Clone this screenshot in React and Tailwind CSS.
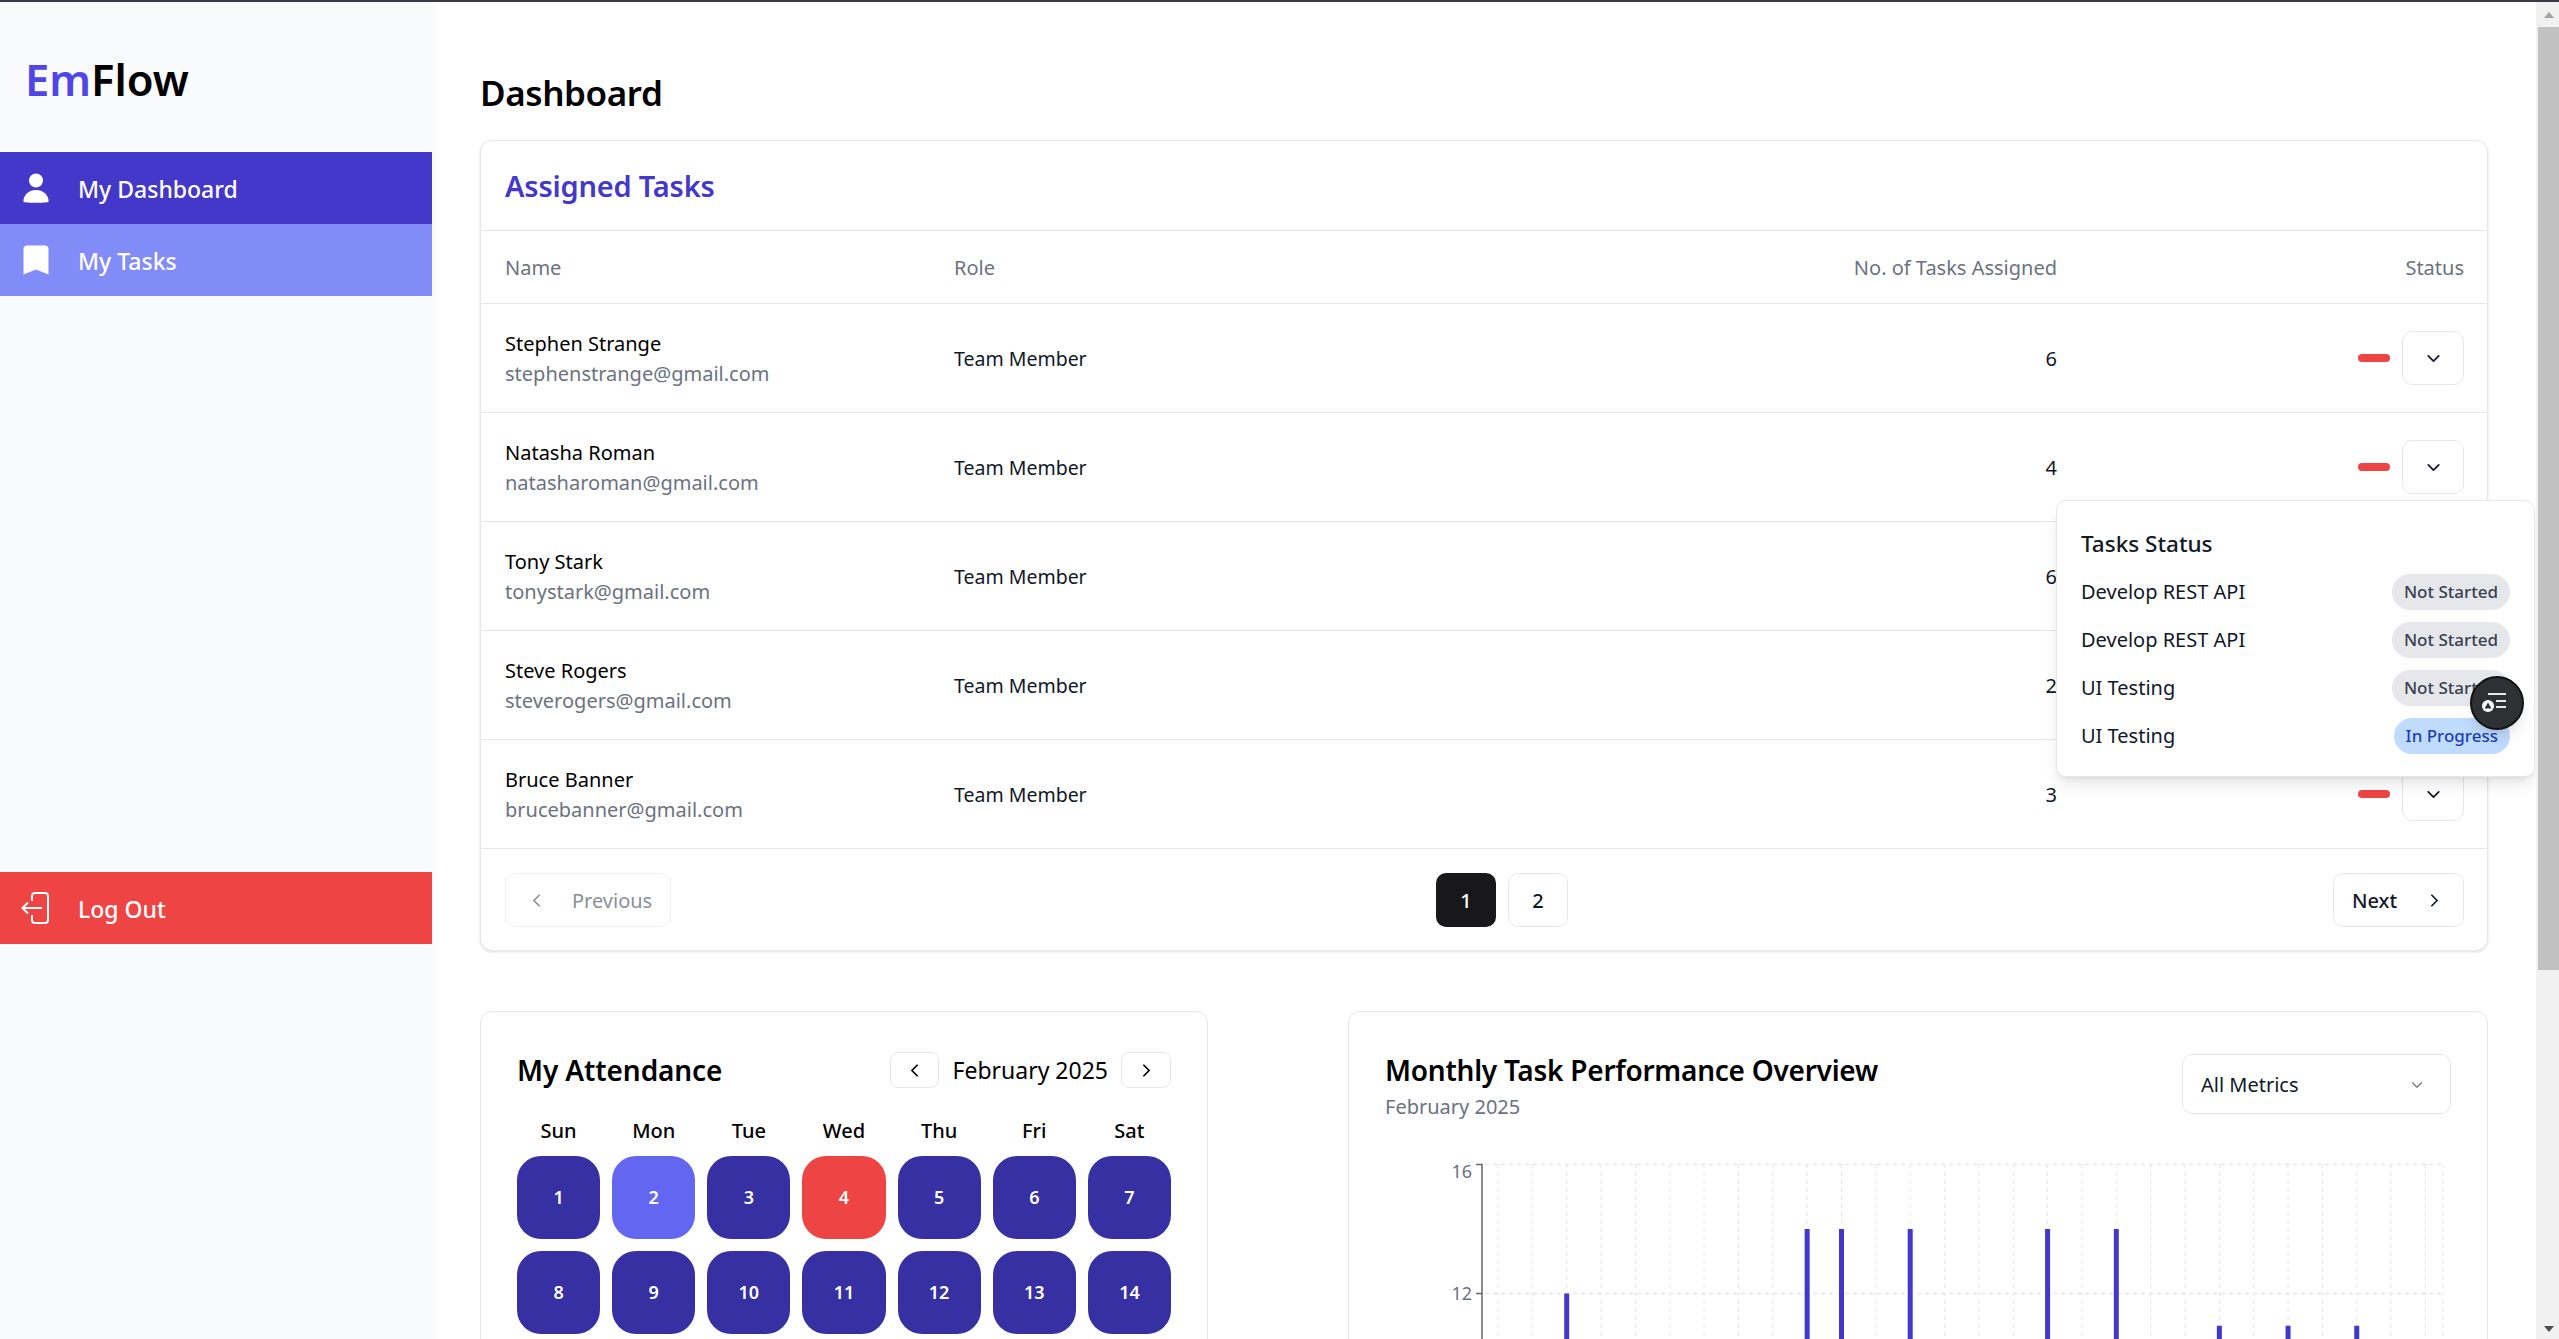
import { ChevronDown, ChevronLeft, ChevronRight } from "lucide-react";

const members = [
  { name: "Stephen Strange", email: "stephenstrange@gmail.com", count: 6 },
  { name: "Natasha Roman", email: "natasharoman@gmail.com", count: 4 },
  { name: "Tony Stark", email: "tonystark@gmail.com", count: 6 },
  { name: "Steve Rogers", email: "steverogers@gmail.com", count: 2 },
  { name: "Bruce Banner", email: "brucebanner@gmail.com", count: 3 }
];

const tasks = [
  { title: "Develop REST API", status: "Not Started" },
  { title: "Develop REST API", status: "Not Started" },
  { title: "UI Testing", status: "Not Started" },
  { title: "UI Testing", status: "In Progress" }
];

const weekDays = ["Sun", "Mon", "Tue", "Wed", "Thu", "Fri", "Sat"];
const days = [1, 2, 3, 4, 5, 6, 7, 8, 9, 10, 11, 12, 13, 14];

// day index -> value for the performance chart
const bars = [
  { index: 2, value: 12 },
  { index: 9, value: 14 },
  { index: 10, value: 14 },
  { index: 12, value: 14 },
  { index: 16, value: 14 },
  { index: 18, value: 14 },
  { index: 21, value: 11 },
  { index: 23, value: 11 },
  { index: 25, value: 11 }
];

const rowGrid = "grid grid-cols-[449px_400px_751px_406px] items-center";

function PersonIcon() {
  return (
    <svg width="26" height="30" viewBox="0 0 26 30" fill="white">
      <circle cx="13" cy="7.5" r="7" />
      <path d="M0.5 29c-0.6-6.500 5-12 12.500-12s13.100 5.500 12.500 12c-4 1-21 1-25 0z" />
    </svg>
  );
}

function BookmarkIcon() {
  return (
    <svg width="26" height="30" viewBox="0 0 26 30" fill="white">
      <path d="M0.500 4c0-2.200 1.300-3.500 3.500-3.500h18c2.200 0 3.500 1.300 3.500 3.500v25.500L13 24.500 0.500 29.500z" />
    </svg>
  );
}

function LogoutIcon() {
  return (
    <svg width="28" height="32" viewBox="0 0 28 32" fill="none" stroke="white" strokeWidth="2">
      <path d="M11 9V4c0-1.700 1.300-3 3-3h10c1.700 0 3 1.300 3 3v24c0 1.700-1.300 3-3 3H14c-1.700 0-3-1.300-3-3v-5" />
      <path d="M21 16H2M7 10.500L1.500 16 7 21.500" />
    </svg>
  );
}

function TaskListIcon() {
  return (
    <svg width="24" height="20" viewBox="0 0 24 20" fill="none">
      <path d="M6 1h18M14 8h10M14 14h10" stroke="#e5e7eb" strokeWidth="2" />
      <circle cx="6" cy="13" r="6" fill="white" />
      <path d="M6 9.500l3.500 6h-7z" fill="#2f3032" />
    </svg>
  );
}

function Sidebar() {
  return (
    <aside className="w-[432px] shrink-0 bg-[#f9fafb] shadow-[2px_0_10px_rgba(0,0,0,0.04)] z-10">
      <div className="h-[150px] pl-[25px] pt-[47px] text-[43.5px] leading-[60px] font-semibold text-black">
        <span className="text-[#4f46e5]">Em</span>Flow
      </div>
      <nav className="text-[23px] font-medium text-white">
        <div className="h-[72px] flex items-center gap-[29px] pl-[23px] bg-[#4338ca]">
          <PersonIcon />
          <span className="pt-[2px]">My Dashboard</span>
        </div>
        <div className="h-[72px] flex items-center gap-[29px] pl-[23px] bg-[#818cf8]">
          <BookmarkIcon />
          <span className="pt-[2px]">My Tasks</span>
        </div>
      </nav>
      <div className="mt-[576px] h-[72px] flex items-center gap-[29px] pl-[21px] bg-[#ef4444] text-[23px] font-medium text-white">
        <LogoutIcon />
        <span className="pt-[2px]">Log Out</span>
      </div>
    </aside>
  );
}

function AssignedTasks() {
  return (
    <section className="rounded-[12px] border border-[#e5e7eb] bg-white shadow-sm">
      <div className="h-[90px] flex items-center px-6 border-b border-[#e5e7eb]">
        <h2 className="text-[29px] font-semibold tracking-[-0.2px] text-[#4338ca]">Assigned Tasks</h2>
      </div>
      <div className={`${rowGrid} h-[73px] pt-[2px] border-b border-[#e5e7eb] text-[20px] text-[#6b7280]`}>
        <div className="px-6">Name</div>
        <div className="px-6">Role</div>
        <div className="px-6 text-right">No. of Tasks Assigned</div>
        <div className="pl-6 pr-[23px] text-right">Status</div>
      </div>
      {members.map(member => (
        <div key={member.email} className={`${rowGrid} h-[109px] border-b border-[#e5e7eb] text-[20px]`}>
          <div className="px-6 pt-[2px]">
            <p className="leading-[30px] text-black">{member.name}</p>
            <p className="leading-[30px] text-[#6b7280]">{member.email}</p>
          </div>
          <div className="px-6 pt-[2px] text-[19.5px] text-[#111827]">Team Member</div>
          <div className="px-6 pt-[2px] text-right text-[#111827]">{member.count}</div>
          <div className="pl-6 pr-[23px] flex items-center justify-end gap-3">
            <span className="w-8 h-2 rounded-full bg-[#ef4444]" />
            <button className="w-[62px] h-[54px] flex items-center justify-center rounded-[10px] border border-[#e5e7eb] bg-white">
              <ChevronDown size={21} color="#111827" />
            </button>
          </div>
        </div>
      ))}
      <div className="h-[101px] pl-6 pr-[23px] flex items-center justify-between text-[20px]">
        <button className="w-[166px] h-[54px] flex items-center gap-[25px] pl-[20px] pt-[2px] rounded-[10px] border border-[#f0f1f3] text-[#8b8f96]">
          <ChevronLeft size={21} />
          Previous
        </button>
        <div className="flex gap-[12px] font-medium">
          <button className="w-[60px] h-[54px] pt-[2px] rounded-[10px] bg-[#18181b] text-white">1</button>
          <button className="w-[60px] h-[54px] pt-[2px] rounded-[10px] border border-[#e5e7eb] text-[#111827]">2</button>
        </div>
        <button className="w-[131px] h-[54px] flex items-center gap-[27px] pl-[18px] pt-[2px] rounded-[10px] border border-[#e5e7eb] font-medium text-[#111827]">
          Next
          <ChevronRight size={21} />
        </button>
      </div>
    </section>
  );
}

function Attendance() {
  return (
    <section className="rounded-[12px] border border-[#e5e7eb] bg-white p-9 h-[500px]">
      <div className="flex items-center justify-between h-[44px]">
        <h2 className="text-[28px] font-semibold tracking-[-0.1px] text-black">My Attendance</h2>
        <div className="flex items-center gap-[13px] text-[23px] text-black">
          <button className="w-[49px] h-[36px] flex items-center justify-center rounded-[8px] border border-[#e5e7eb]">
            <ChevronLeft size={21} />
          </button>
          February 2025
          <button className="w-[50px] h-[36px] flex items-center justify-center rounded-[8px] border border-[#e5e7eb]">
            <ChevronRight size={21} />
          </button>
        </div>
      </div>
      <div className="mt-[24px] grid grid-cols-7 gap-x-3 text-center text-[20px] font-medium leading-[30px] text-black">
        {weekDays.map(day => (
          <div key={day}>{day}</div>
        ))}
      </div>
      <div className="mt-[10px] grid grid-cols-7 gap-3">
        {days.map(day => (
          <div
            key={day}
            className={`aspect-square flex items-center justify-center rounded-[24px] text-[18px] font-semibold text-white ${
              day === 2 ? "bg-[#6366f1]" : day === 4 ? "bg-[#ef4444]" : "bg-[#3730a3]"
            }`}
          >
            {day}
          </div>
        ))}
      </div>
    </section>
  );
}

function PerformanceChart() {
  const xs = Array.from({ length: 28 }, (_, i) => 16 + i * 34.35);
  return (
    <svg width="1064" height="248" viewBox="0 -8 1064 248" className="mt-[32px]">
      <g stroke="#e5e7eb" strokeDasharray="4 4" strokeWidth="1.500">
        <path d="M100 3.500H1058" />
        <path d="M100 132.500H1058" />
      </g>
      <g stroke="#e5e7eb" strokeDasharray="4 4" strokeWidth="1">
        {xs.map(x => (
          <path key={x} d={`M${97 + x} 3V240`} />
        ))}
        <path d="M1058 3V240" />
      </g>
      <path d="M91 3.500H97V240M91 132.500H97" stroke="#666" fill="none" strokeWidth="1.500" />
      <text x="87" y="17" textAnchor="end" fontSize="18" fill="#6b7280">16</text>
      <text x="87" y="139" textAnchor="end" fontSize="18" fill="#6b7280">12</text>
      {bars.map(bar => (
        <rect
          key={bar.index}
          x={97 + xs[bar.index] - 2.500}
          y={132.500 + (12 - bar.value) * 32.250}
          width="5"
          height="240"
          fill="#4338ca"
        />
      ))}
    </svg>
  );
}

function MonthlyOverview() {
  return (
    <section className="rounded-[12px] border border-[#e5e7eb] bg-white p-9 h-[500px]">
      <div className="flex justify-between">
        <div>
          <h2 className="h-[44px] leading-[44px] text-[28px] font-semibold tracking-[-0.25px] text-black">
            Monthly Task Performance Overview
          </h2>
          <p className="pt-px text-[20px] leading-[28px] text-[#6b7280]">February 2025</p>
        </div>
        <div className="mt-[6px] w-[269px] h-[60px] flex items-center justify-between pl-[18px] pr-[24px] pt-[2px] rounded-[10px] border border-[#e5e7eb] text-[20px] text-[#111827]">
          All Metrics
          <ChevronDown size={18} strokeWidth={1.5} color="#6b7280" />
        </div>
      </div>
      <PerformanceChart />
    </section>
  );
}

function TasksPopover() {
  return (
    <div className="absolute left-[1624px] top-[498px] w-[479px] h-[277px] rounded-[10px] border border-[#e5e7eb] bg-white px-6 pt-[22px] shadow-lg">
      <h3 className="text-[22.5px] leading-[42px] font-medium text-[#111827]">Tasks Status</h3>
      <div className="mt-[9px] flex flex-col gap-3">
        {tasks.map((task, index) => (
          <div key={index} className="h-9 flex items-center justify-between text-[20px] text-[#111827]">
            {task.title}
            <span
              className={`h-9 px-3 flex items-center rounded-full text-[17px] font-medium ${
                task.status === "In Progress" ? "bg-[#bfdbfe] text-[#1e40af]" : "bg-[#e5e7eb] text-[#374151]"
              }`}
            >
              {task.status}
            </span>
          </div>
        ))}
      </div>
    </div>
  );
}

export default function App() {
  return (
    <div className="h-screen overflow-hidden flex flex-col bg-white font-['Noto_Sans',sans-serif]">
      <div className="h-[2px] shrink-0 bg-[#3a3b45]" />
      <div className="flex-1 min-h-0 flex">
        <Sidebar />
        <main className="relative flex-1 min-w-0 overflow-hidden pl-12 pr-12 pt-[64px]">
          <h1 className="text-[35px] leading-[54px] font-semibold tracking-[-0.4px] text-black">Dashboard</h1>
          <div className="mt-[20px]">
            <AssignedTasks />
          </div>
          <div className="mt-[60px] grid grid-cols-[728px_1140px] gap-x-[140px]">
            <Attendance />
            <MonthlyOverview />
          </div>
          <TasksPopover />
        </main>
        {/* window scrollbar */}
        <div className="w-[23px] shrink-0 bg-[#f1f1f1] pl-[2px] flex flex-col">
          <div className="h-[25px] flex items-center justify-center">
            <span className="w-0 h-0 border-x-[5px] border-x-transparent border-b-[6px] border-b-[#a3a3a3]" />
          </div>
          <div className="h-[943px] bg-[#c1c1c1]" />
          <div className="mt-auto h-[20px] flex items-center justify-center">
            <span className="w-0 h-0 border-x-[5px] border-x-transparent border-t-[6px] border-t-[#505050]" />
          </div>
        </div>
      </div>
      <button className="fixed left-[2470px] top-[676px] z-20 w-[54px] h-[54px] pr-[6px] flex items-center justify-center rounded-full border-2 border-[#111] bg-[#2f3032] shadow-lg">
        <TaskListIcon />
      </button>
    </div>
  );
}
